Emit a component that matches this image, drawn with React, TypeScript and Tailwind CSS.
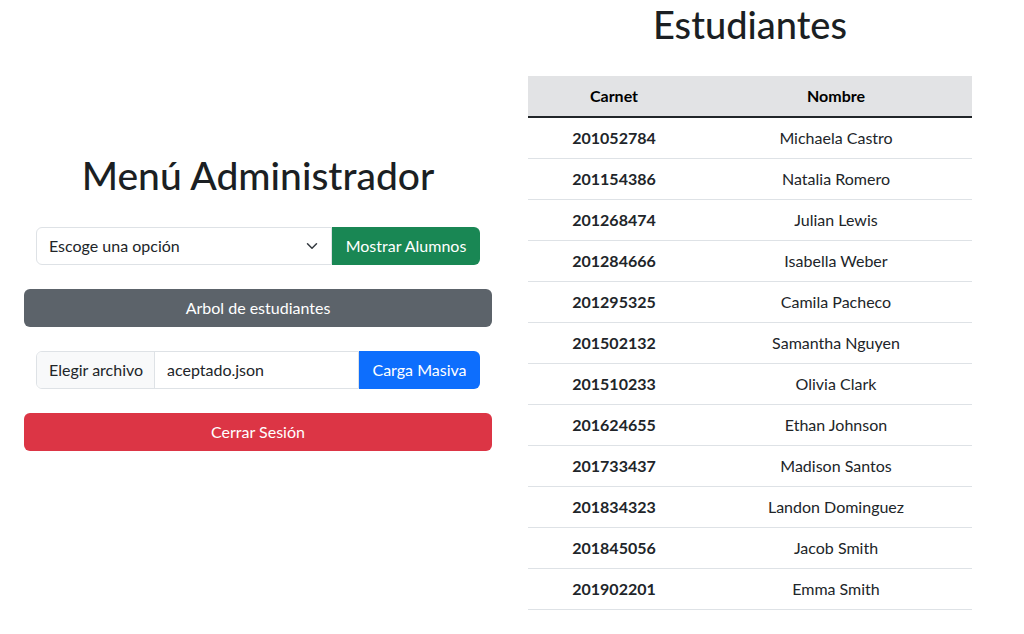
import { useState } from 'react';

const estudiantes = [
  { carnet: '201052784', nombre: 'Michaela Castro' },
  { carnet: '201154386', nombre: 'Natalia Romero' },
  { carnet: '201268474', nombre: 'Julian Lewis' },
  { carnet: '201284666', nombre: 'Isabella Weber' },
  { carnet: '201295325', nombre: 'Camila Pacheco' },
  { carnet: '201502132', nombre: 'Samantha Nguyen' },
  { carnet: '201510233', nombre: 'Olivia Clark' },
  { carnet: '201624655', nombre: 'Ethan Johnson' },
  { carnet: '201733437', nombre: 'Madison Santos' },
  { carnet: '201834323', nombre: 'Landon Dominguez' },
  { carnet: '201845056', nombre: 'Jacob Smith' },
  { carnet: '201902201', nombre: 'Emma Smith' },
];

function App() {
  const [opcion, setOpcion] = useState('');

  return (
    <div className="h-screen overflow-y-scroll bg-white text-[#212529] font-['Lato','Noto_Sans',sans-serif] text-base [&::-webkit-scrollbar]:w-[17px] [&::-webkit-scrollbar-track]:bg-[#f1f1f1] [&::-webkit-scrollbar-thumb]:bg-[#c1c1c1] [&::-webkit-scrollbar-thumb]:border-x-[2px] [&::-webkit-scrollbar-thumb]:border-solid [&::-webkit-scrollbar-thumb]:border-[#f1f1f1] [&::-webkit-scrollbar-button:single-button]:block [&::-webkit-scrollbar-button:single-button]:h-[16px] [&::-webkit-scrollbar-button:single-button]:bg-[#f1f1f1]">
      <div className="flex gap-[36px] pl-[24px] pb-[610px]">
        {/* menu */}
        <div className="w-[468px] shrink-0 pt-[151px]">
          <h1 className="text-[39px] leading-[48px] font-medium text-[#1b1f23] text-center mb-[28px]">Menú Administrador</h1>

          <div className="flex mx-[12px] h-[38px]">
            <div className="relative flex-1">
              <select
                value={opcion}
                onChange={e => setOpcion(e.target.value)}
                className="appearance-none w-full h-full border border-[#dee2e6] rounded-l-md pl-[12px] pr-8 bg-white text-[#212529] outline-none"
              >
                <option value="">Escoge una opción</option>
                <option value="inorden">Inorden</option>
                <option value="preorden">Preorden</option>
                <option value="postorden">Postorden</option>
              </select>
              <svg className="absolute right-[13px] top-[13px] w-[14px] h-[12px] pointer-events-none" viewBox="0 0 16 16">
                <path d="M2 5l6 6 6-6" fill="none" stroke="#343a40" strokeWidth="2" strokeLinecap="round" strokeLinejoin="round" />
              </svg>
            </div>
            <button className="w-[148px] bg-[#198754] text-white rounded-r-md">Mostrar Alumnos</button>
          </div>

          <button className="w-full h-[38px] mt-[24px] bg-[#5c636a] text-white rounded-md">Arbol de estudiantes</button>

          <div className="flex mx-[12px] h-[38px] mt-[24px]">
            <div className="flex flex-1 border border-[#dee2e6] rounded-l-md overflow-hidden">
              <span className="w-[118px] bg-[#f8f9fa] border-r border-[#dee2e6] flex items-center pl-[12px]">Elegir archivo</span>
              <span className="flex-1 flex items-center pl-[12px]">aceptado.json</span>
            </div>
            <button className="w-[121px] bg-[#0d6efd] text-white rounded-r-md">Carga Masiva</button>
          </div>

          <button className="w-full h-[38px] mt-[24px] bg-[#dc3545] text-white rounded-md">Cerrar Sesión</button>
        </div>

        {/* tabla */}
        <div className="w-[444px] shrink-0">
          <h1 className="text-[38px] leading-[48px] font-medium text-[#1b1f23] text-center mb-[28px]">Estudiantes</h1>
          <table className="w-full text-center border-collapse">
            <thead>
              <tr className="bg-[#e2e3e5] border-b-2 border-[#212529]">
                <th className="w-[172px] py-[8px] font-bold text-black">Carnet</th>
                <th className="py-[8px] font-bold text-black">Nombre</th>
              </tr>
            </thead>
            <tbody>
              {estudiantes.map(e => (
                <tr key={e.carnet} className="border-b border-[#dee2e6]">
                  <td className="py-[8px] font-bold">{e.carnet}</td>
                  <td className="py-[8px]">{e.nombre}</td>
                </tr>
              ))}
            </tbody>
          </table>
        </div>
      </div>
    </div>
  );
}

export default App;
